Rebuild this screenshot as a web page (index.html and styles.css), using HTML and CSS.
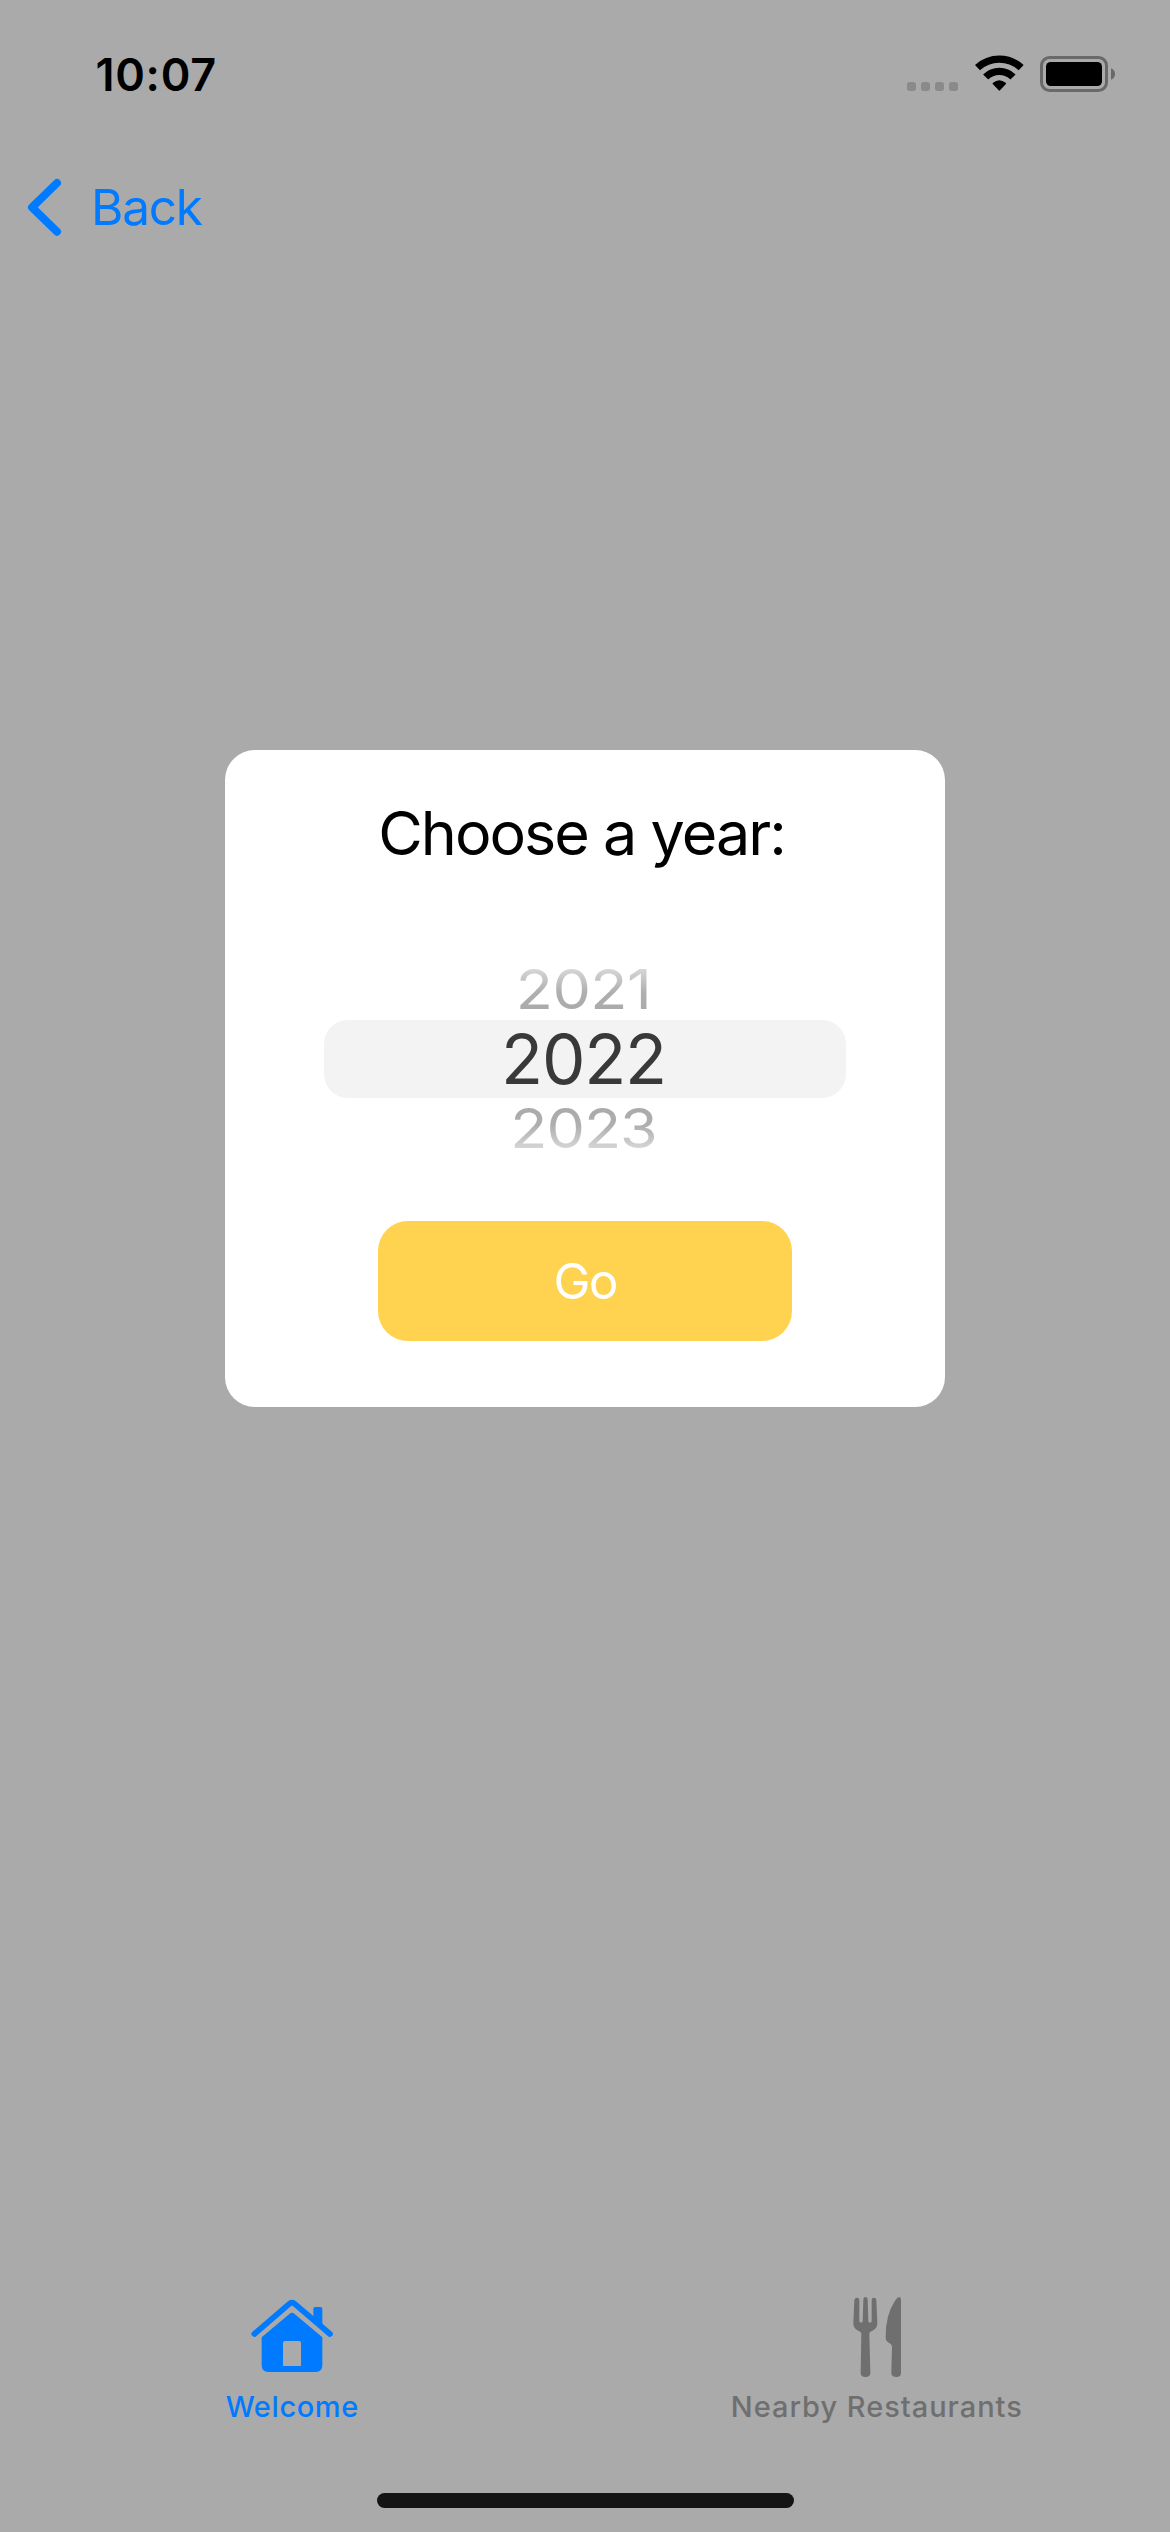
FILE: index.html
```html
<!DOCTYPE html>
<html lang="en">
<head>
<meta charset="utf-8">
<title>Choose a year</title>
<link rel="stylesheet" href="styles.css">
</head>
<body>
<div class="screen">
  <header class="status">
    <span class="time">10:07</span>
    <div class="indicators">
      <svg width="51" height="48" viewBox="81 60 153 144" fill="#8a8a8a">
        <rect x="81" y="156" width="27" height="27" rx="8"/>
        <rect x="123" y="156" width="27" height="27" rx="8"/>
        <rect x="165" y="156" width="27" height="27" rx="8"/>
        <rect x="207" y="156" width="27" height="27" rx="8"/>
      </svg>
      <svg width="49" height="48" viewBox="284 60 147 144">
        <g fill="none" stroke="#000" stroke-width="22">
          <path d="M291.5 113A96.5 96.5 0 0 1 422.5 113"/>
          <path d="M316 141A58.5 58.5 0 0 1 398 141"/>
        </g>
        <path d="M338 163Q335 160 338 158Q357 143 376 158Q379 160 376 163L359 181Q357 183 355 181Z"/>
      </svg>
      <svg width="75" height="48" viewBox="480 60 225 144">
        <rect x="484.5" y="82.500" width="195" height="99" rx="24" fill="none" stroke="#696969" stroke-width="9"/>
        <rect x="498" y="96" width="168" height="72" rx="14"/>
        <path fill="#696969" d="M693 115Q705 120 705 132Q705 144 693 149Z"/>
      </svg>
    </div>
  </header>

  <nav class="navbar">
    <a class="back">
      <svg width="40" height="63" viewBox="72 436 120 189" fill="none" stroke="#007aff" stroke-width="24" stroke-linecap="round" stroke-linejoin="round">
        <path d="M171 457L96 530L171 603"/>
      </svg>
      <span>Back</span>
    </a>
  </nav>

  <main class="content">
    <section class="card">
      <h1 class="title">Choose a year:</h1>
      <div class="picker">
        <div class="year above">2021</div>
        <div class="year selected">2022</div>
        <div class="year below">2023</div>
      </div>
      <button class="go">Go</button>
    </section>
  </main>

  <footer class="tabs">
    <a class="tab active">
      <svg width="100" height="88" viewBox="50 30 300 264" fill="currentColor">
        <path d="M87 147L190 58Q200 49 210 58L314 147" fill="none" stroke="currentColor" stroke-width="17" stroke-linecap="round"/>
        <path d="M264 104V72Q264 66 270 66H285Q291 66 291 72V128Z"/>
        <path fill-rule="evenodd" d="M109 157L193 86Q200 80 207 86L291 157V241Q291 261 271 261H129Q109 261 109 241ZM173 243H227V173Q227 168 222 168H178Q173 168 173 173Z"/>
      </svg>
      <span>Welcome</span>
    </a>
    <a class="tab">
      <svg width="100" height="88" viewBox="350 75 300 264" fill="currentColor">
        <path d="M432 90Q433 83 440 83Q447 83 447 90V153Q447 158 452 158Q457 158 457 153L459 89Q459 81 465 81Q472 81 472 89L474 153Q474 158 479 158Q484 158 484 153V90Q484 83 491 83Q498 83 498 90L501 160Q501 173 491 179L481 185Q477 187 477 191L480 308Q480 321 466 321Q451 321 451 308L453 191Q453 187 449 185L439 179Q429 173 429 160Z"/>
        <path d="M572 88V308Q572 321 558 321Q543 321 543 308L545 231Q545 225 541 222L531 215Q526 211 526 203Q525 137 553 94C559 86 562 81 567 81Q572 82 572 88Z"/>
      </svg>
      <span>Nearby Restaurants</span>
    </a>
  </footer>
  <div class="home-indicator"></div>
</div>
</body>
</html>
```

FILE: styles.css
```css
* {
  box-sizing: border-box;
}

body {
  margin: 0;
  background: #aaa;
  font-family: Inter, "Liberation Sans", sans-serif;
  color: #000;
}

svg {
  display: block;
  flex: none;
}

.screen {
  display: flex;
  flex-direction: column;
  width: 1170px;
  height: 2532px;
}

.status {
  display: flex;
  align-items: center;
  justify-content: space-between;
  height: 148px;
  padding: 0 55px 0 95.5px;
}

.time {
  font-size: 45px;
  font-weight: 600;
  line-height: 55px;
  letter-spacing: 0.7px;
}

.indicators {
  display: flex;
  gap: 16.500px;
}

.navbar {
  display: flex;
  align-items: center;
  height: 118px;
  padding-left: 24px;
}

.back {
  display: flex;
  align-items: center;
  gap: 27px;
  color: #007aff;
  font-size: 49.5px;
  line-height: 60px;
  letter-spacing: -1.2px;
}

.content {
  flex: 1;
  display: flex;
  justify-content: center;
  align-items: flex-start;
  padding-top: 484px;
}

.card {
  display: flex;
  flex-direction: column;
  align-items: center;
  width: 720px;
  height: 657px;
  margin-left: 0;
  padding-top: 43px;
  border-radius: 30px;
  background: #fff;
}

.title {
  margin: 0;
  padding-right: 7px;
  font-size: 61px;
  font-weight: 400;
  line-height: 80px;
  letter-spacing: -1.97px;
}

.picker {
  width: 522px;
  margin-top: 86px;
  text-align: center;
}

.year {
  height: 61px;
  font-size: 61px;
  line-height: 61px;
  text-indent: -3px;
}

.above,
.below {
  transform: scaleY(0.9);
  background-clip: text;
  -webkit-background-clip: text;
  color: transparent;
}

.above {
  letter-spacing: -0.6px;
  background-image: linear-gradient(#dedede 5%, #afafaf 55%, #a8a8a8);
}

.below {
  letter-spacing: -1px;
  background-image: linear-gradient(#a8a8a8, #afafaf 45%, #dedede 95%);
}

.selected {
  height: 78px;
  border-radius: 24px;
  background: #f3f3f3;
  color: #393939;
  font-size: 69px;
  line-height: 78px;
  letter-spacing: -1.2px;
}

.go {
  width: 414px;
  height: 120px;
  margin-top: 62px;
  padding: 0;
  border: 0;
  border-radius: 30px;
  background: #ffd250;
  color: #fff;
  font: 400 49.5px/120px Inter, "Liberation Sans", sans-serif;
  letter-spacing: -1.9px;
}

.tabs {
  display: flex;
  padding-right: 1px;
}

.tab {
  flex: 1;
  display: flex;
  flex-direction: column;
  align-items: center;
  gap: 4px;
  color: #6f6f6f;
  font-size: 29px;
  font-weight: 500;
  line-height: 40px;
  letter-spacing: 0.98px;
}

.active {
  color: #007aff;
  letter-spacing: 0.6px;
}

.home-indicator {
  width: 417px;
  height: 15px;
  margin: 66px auto 24px;
  border-radius: 8px;
  background: #141414;
}
```
